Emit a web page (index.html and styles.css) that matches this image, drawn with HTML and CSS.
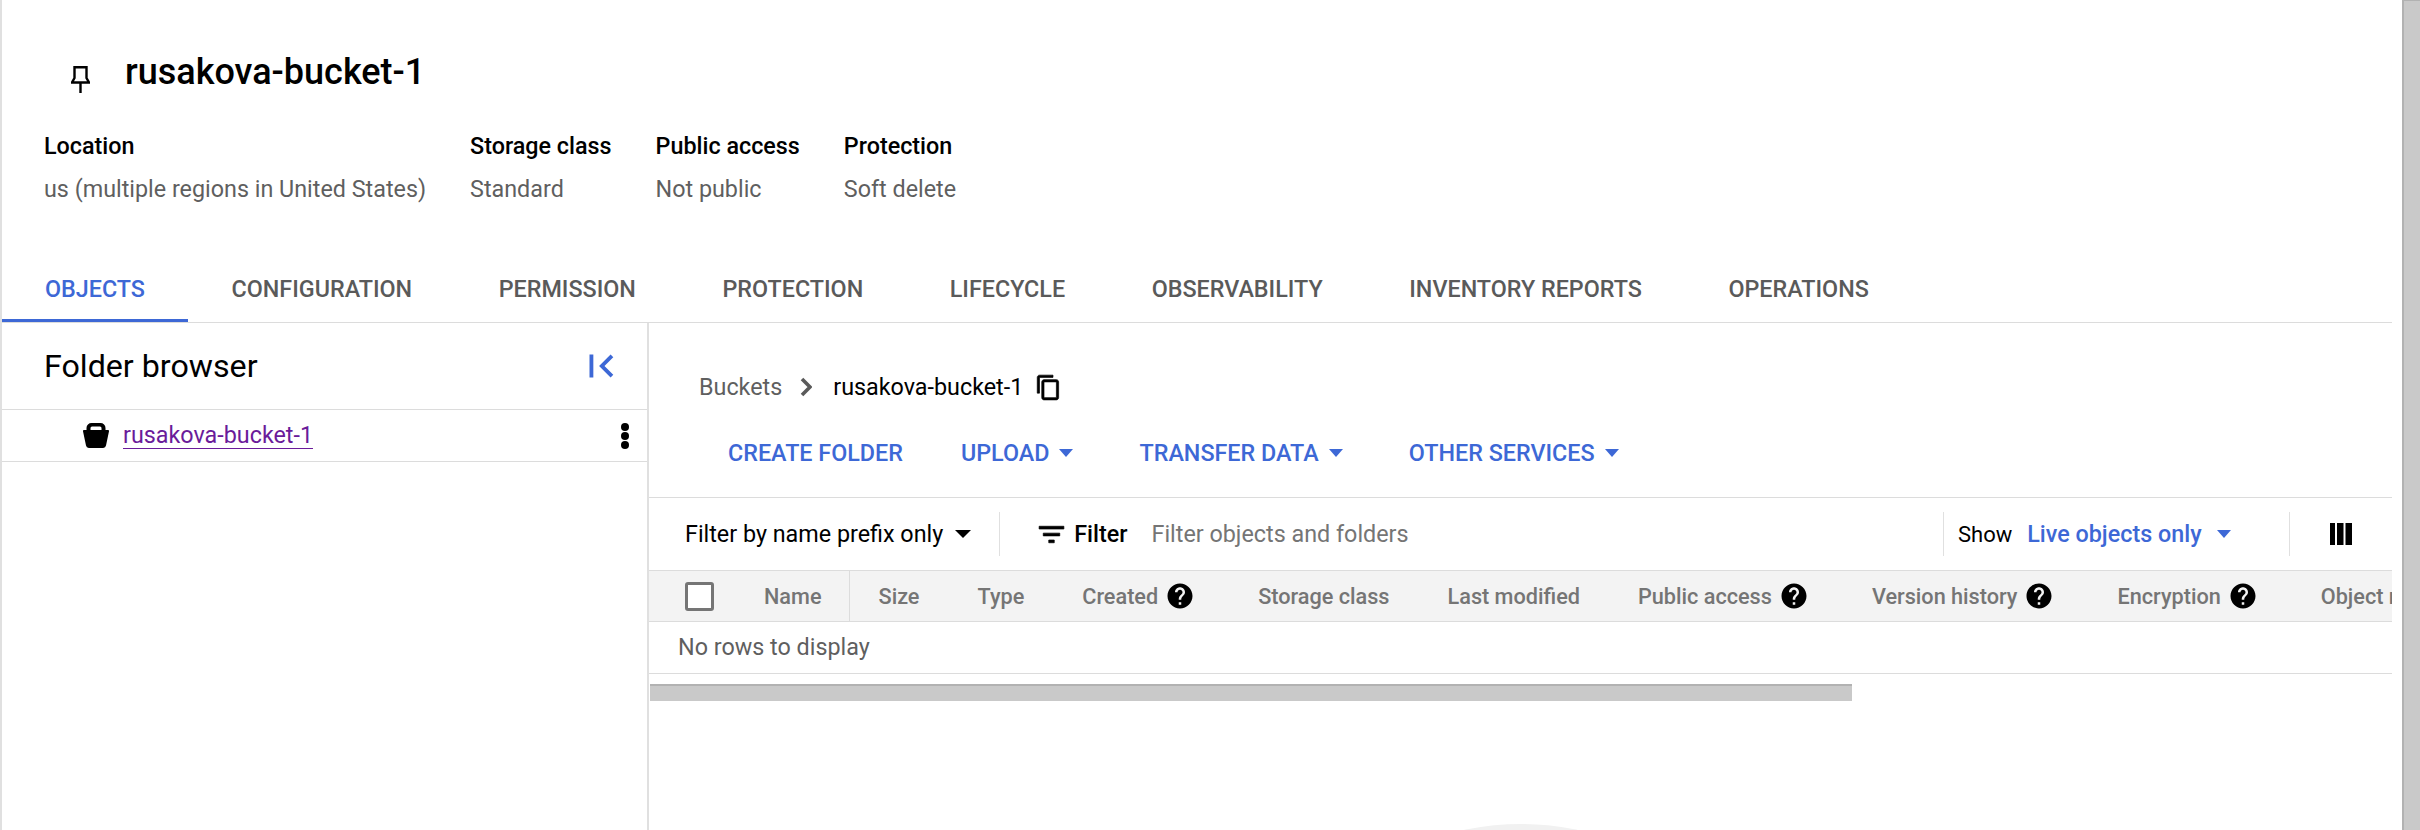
FILE: index.html
```html
<!DOCTYPE html>
<html lang="en">
<head>
    <meta charset="UTF-8">
    <title>rusakova-bucket-1</title>
    <link rel="stylesheet" href="styles.css">
</head>
<body>
    <div class="page">
        <div class="content">
            <!-- Bucket header -->
            <header class="bucket-head">
                <div class="title-row">
                    <svg class="pin" viewBox="0 0 19 27"><path d="M3.500 1.200h12V12l2.500 4.500H1L3.500 12zM9.500 16.500V27"/></svg>
                    <h1>rusakova-bucket-1</h1>
                </div>
                <dl class="meta">
                    <div class="meta-item"><dt>Location</dt><dd>us (multiple regions in United States)</dd></div>
                    <div class="meta-item"><dt>Storage class</dt><dd>Standard</dd></div>
                    <div class="meta-item"><dt>Public access</dt><dd>Not public</dd></div>
                    <div class="meta-item"><dt>Protection</dt><dd>Soft delete</dd></div>
                </dl>
            </header>

            <!-- Tabs -->
            <nav class="tabs">
                <a class="tab active">OBJECTS</a>
                <a class="tab">CONFIGURATION</a>
                <a class="tab">PERMISSION</a>
                <a class="tab">PROTECTION</a>
                <a class="tab">LIFECYCLE</a>
                <a class="tab">OBSERVABILITY</a>
                <a class="tab">INVENTORY REPORTS</a>
                <a class="tab">OPERATIONS</a>
            </nav>

            <main class="panes">
                <!-- Folder browser -->
                <aside class="browser">
                    <div class="browser-head">
                        <h2>Folder browser</h2>
                        <svg class="collapse" viewBox="0 0 24 24"><path d="M18.410 16.590L13.820 12l4.590-4.590L17 6l-6 6 6 6zM6 6h2v12H6z"/></svg>
                    </div>
                    <div class="browser-row">
                        <svg class="bucket" viewBox="0 0 26 25"><path fill-rule="evenodd" d="M3.500 7V5a5 5 0 0 1 5-5h9a5 5 0 0 1 5 5v2h2.500a1 1 0 0 1 1 1.200L23 22.500a3 3 0 0 1-3 2.500H6a3 3 0 0 1-3-2.500L0 8.200A1 1 0 0 1 1 7zM7.500 7h11V5a1.500 1.500 0 0 0-1.500-1.500H9A1.500 1.500 0 0 0 7.500 5z"/></svg>
                        <a class="bucket-link">rusakova-bucket-1</a>
                        <span class="more"><i></i><i></i><i></i></span>
                    </div>
                </aside>

                <!-- Objects list -->
                <section class="objects">
                    <div class="crumbs">
                        <span class="crumb">Buckets</span>
                        <svg class="crumb-sep" viewBox="0 0 12 20"><path d="M2 2l8 8-8 8"/></svg>
                        <span class="crumb-current">rusakova-bucket-1</span>
                        <svg class="copy" viewBox="0 0 24 24"><path d="M16 1H4c-1.100 0-2 .9-2 2v14h2V3h12V1zm3 4H8c-1.100 0-2 .9-2 2v14c0 1.100.9 2 2 2h11c1.100 0 2-.9 2-2V7c0-1.100-.9-2-2-2zm0 16H8V7h11v14z"/></svg>
                    </div>

                    <div class="actions">
                        <a class="action">CREATE FOLDER</a>
                        <a class="action">UPLOAD<b class="caret"></b></a>
                        <a class="action">TRANSFER DATA<b class="caret"></b></a>
                        <a class="action">OTHER SERVICES<b class="caret"></b></a>
                    </div>

                    <div class="filter-bar">
                        <div class="prefix">Filter by name prefix only<b class="caret dark"></b></div>
                        <svg class="filter-icon" viewBox="0 0 24 24"><path d="M10 18h4v-2h-4v2zM3 6v2h18V6H3zm3 7h12v-2H6v2z"/></svg>
                        <span class="filter-label">Filter</span>
                        <span class="filter-hint">Filter objects and folders</span>
                        <div class="show"><span class="show-label">Show</span><span class="show-value">Live objects only</span><b class="caret"></b></div>
                        <div class="columns-btn">
                            <svg viewBox="0 0 22 22"><path d="M0 0h5v22H0zM7 0h6.500v22H7zM15.500 0H22v22h-6.500z"/></svg>
                        </div>
                    </div>

                    <div class="table-head">
                        <div class="cell-check"><span class="checkbox"></span></div>
                        <div class="th name">Name</div>
                        <div class="th">Size</div>
                        <div class="th">Type</div>
                        <div class="th">Created<svg class="help" viewBox="0 0 24 24"><use href="#help"/></svg></div>
                        <div class="th">Storage class</div>
                        <div class="th">Last modified</div>
                        <div class="th">Public access<svg class="help" viewBox="0 0 24 24"><use href="#help"/></svg></div>
                        <div class="th">Version history<svg class="help" viewBox="0 0 24 24"><use href="#help"/></svg></div>
                        <div class="th">Encryption<svg class="help" viewBox="0 0 24 24"><use href="#help"/></svg></div>
                        <div class="th">Object retention</div>
                    </div>
                    <div class="empty-row">No rows to display</div>
                    <div class="h-scroll"></div>

                    <div class="illustration"><span></span></div>
                </section>
            </main>
        </div>
        <div class="v-scroll"></div>
    </div>

    <svg class="defs" width="0" height="0">
        <symbol id="help" viewBox="0 0 24 24">
            <path d="M12 2C6.480 2 2 6.480 2 12s4.480 10 10 10 10-4.480 10-10S17.520 2 12 2zm1 17h-2v-2h2v2zm2.070-7.750l-.9.920C13.450 12.900 13 13.500 13 15h-2v-.5c0-1.100.45-2.100 1.170-2.830l1.240-1.260c.37-.36.59-.86.59-1.410 0-1.100-.9-2-2-2s-2 .9-2 2H8c0-2.210 1.790-4 4-4s4 1.790 4 4c0 .88-.36 1.680-.93 2.250z"/>
        </symbol>
    </svg>
</body>
</html>
```

FILE: styles.css
```css
/* Base Reset */
* {
    margin: 0;
    padding: 0;
    box-sizing: border-box;
}

html, body {
    height: 100%;
    overflow: hidden;
}

body {
    font-family: Roboto, "Liberation Sans", sans-serif;
    font-size: 23.33px;
    color: #000;
    background: #fff;
}

.defs {
    position: absolute;
}

.page {
    display: flex;
    height: 830px;
}

.content {
    width: 2392px;
    margin-right: 10px;
    display: flex;
    flex-direction: column;
    border-left: 2px solid #e0e0e0;
    overflow: hidden;
}

.v-scroll {
    flex: 1;
    background: #c9c9c9;
    border-left: 2px solid #b2b2b2;
    border-top: 1px solid #b2b2b2;
}

/* Bucket header */
.bucket-head {
    height: 256px;
    padding: 40px 0 0 42px;
}

.title-row {
    display: flex;
    align-items: center;
    height: 64px;
}

.pin {
    width: 19px;
    height: 27px;
    margin: 14px 0 0 27px;
    fill: none;
    stroke: #000;
    stroke-width: 2.4;
}

h1 {
    font-size: 36px;
    font-weight: 500;
    margin-left: 35px;
}

.meta {
    display: flex;
    gap: 44px;
    margin-top: 26px;
}

.meta dt {
    font-weight: 500;
    height: 32px;
    line-height: 32px;
}

.meta dd {
    color: #5f5f5f;
    height: 32px;
    line-height: 32px;
    margin-top: 11px;
}

/* Tabs */
.tabs {
    display: flex;
    gap: 0.5px;
    height: 67px;
    border-bottom: 1px solid #dcdcdc;
    flex: none;
}

.tab {
    height: 66px;
    padding: 0 43px;
    line-height: 66px;
    font-weight: 500;
    color: #5a5a5a;
    border-bottom: 3px solid transparent;
}

.tab.active {
    color: #3d68d6;
    border-bottom-color: #3d68d6;
}

/* Panes */
.panes {
    flex: 1;
    display: flex;
    min-height: 0;
}

.browser {
    width: 647px;
    flex: none;
    border-right: 2px solid #e0e0e0;
}

.browser-head {
    height: 87px;
    display: flex;
    align-items: center;
    justify-content: space-between;
    padding: 0 23px 0 42px;
    border-bottom: 1px solid #dcdcdc;
}

.browser-head h2 {
    font-size: 32.2px;
    font-weight: 400;
}

.collapse {
    width: 46px;
    height: 46px;
    fill: #3d68d6;
}

.browser-row {
    height: 52px;
    display: flex;
    align-items: center;
    padding: 0 18px 0 81px;
    border-bottom: 1px solid #dcdcdc;
}

.bucket {
    width: 26px;
    height: 25px;
}

.bucket-link {
    margin-left: 14px;
    color: #6a1b9a;
    border-bottom: 1px solid #6a1b9a;
    line-height: 26px;
    flex: none;
}

.more {
    margin-left: auto;
    display: flex;
    flex-direction: column;
    gap: 1px;
}

.more i {
    display: block;
    width: 8px;
    height: 8px;
    border-radius: 50%;
    background: #000;
}

/* Objects */
.objects {
    flex: 1;
    min-width: 0;
}

.crumbs {
    display: flex;
    align-items: center;
    height: 46px;
    margin-top: 41px;
    padding-left: 50px;
}

.crumb {
    color: #5f5f5f;
}

.crumb-sep {
    width: 12px;
    height: 20px;
    margin-left: 18px;
    fill: none;
    stroke: #5a5a5a;
    stroke-width: 3.6;
}

.crumb-current {
    margin-left: 21px;
}

.copy {
    width: 27px;
    height: 27px;
    margin-left: 12px;
    stroke: #000;
    stroke-width: 0.6;
}

.actions {
    display: flex;
    align-items: center;
    height: 50px;
    margin-top: 18px;
    margin-bottom: 19px;
    padding-left: 79px;
    gap: 58px;
}

.action {
    display: flex;
    align-items: center;
    font-weight: 500;
    color: #3d68d6;
}

.action .caret {
    margin-right: 8px;
}

.caret {
    width: 0;
    height: 0;
    margin-left: 10px;
    border-left: 7px solid transparent;
    border-right: 7px solid transparent;
    border-top: 8px solid #3d68d6;
}

.caret.dark {
    border-left-width: 8px;
    border-right-width: 8px;
    border-top-color: #000;
    margin-left: 12px;
}

.filter-bar {
    display: flex;
    align-items: center;
    height: 73px;
    border-top: 1px solid #dcdcdc;
    padding-left: 36px;
}

.prefix {
    display: flex;
    align-items: center;
    height: 44px;
    padding-right: 28px;
    border-right: 1px solid #e0e0e0;
}

.filter-icon {
    width: 33px;
    height: 33px;
    margin-left: 35px;
    stroke: #000;
    stroke-width: 0.5;
}

.filter-label {
    font-weight: 500;
    margin-left: 6px;
}

.filter-hint {
    margin-left: 24px;
    color: #757575;
}

.show {
    display: flex;
    align-items: center;
    height: 44px;
    margin-left: auto;
    width: 347px;
    padding-left: 14px;
    border-left: 1px solid #e0e0e0;
    border-right: 1px solid #e0e0e0;
}

.show-label {
    font-size: 22px;
}

.show-value {
    color: #3d68d6;
    font-weight: 500;
    margin-left: 15px;
}

.show .caret {
    margin-left: 15px;
}

.columns-btn {
    width: 102px;
    padding-left: 40px;
    display: flex;
}

.columns-btn svg {
    width: 22px;
    height: 22px;
}

/* Table */
.table-head {
    display: flex;
    align-items: center;
    height: 52px;
    background: #f3f3f3;
    border-top: 1px solid #dcdcdc;
    border-bottom: 1px solid #dcdcdc;
    overflow: hidden;
}

.cell-check {
    width: 86px;
    flex: none;
    padding-left: 36px;
    display: flex;
}

.checkbox {
    width: 29px;
    height: 29px;
    border: 3px solid #757575;
    border-radius: 3px;
    background: #fff;
}

.th {
    flex: none;
    display: flex;
    align-items: center;
    height: 100%;
    padding: 0 29px;
    font-size: 21.67px;
    font-weight: 500;
    color: #757575;
}

.th.name {
    padding-right: 27px;
    border-right: 1px solid #dcdcdc;
}

.help {
    width: 30px;
    height: 30px;
    margin: 0 5px 0 7px;
}

.empty-row {
    height: 52px;
    line-height: 51px;
    padding-left: 29px;
    color: #5f5f5f;
    border-bottom: 1px solid #dcdcdc;
}

.h-scroll {
    width: 1202px;
    height: 17px;
    margin: 10px 0 0 1px;
    background: #c9c9c9;
    border-top: 2px solid #b2b2b2;
}

.illustration {
    display: flex;
    justify-content: center;
    margin-top: 123px;
}

.illustration span {
    width: 548px;
    height: 548px;
    flex: none;
    border-radius: 50%;
    background: #f1f1f1;
}
```
